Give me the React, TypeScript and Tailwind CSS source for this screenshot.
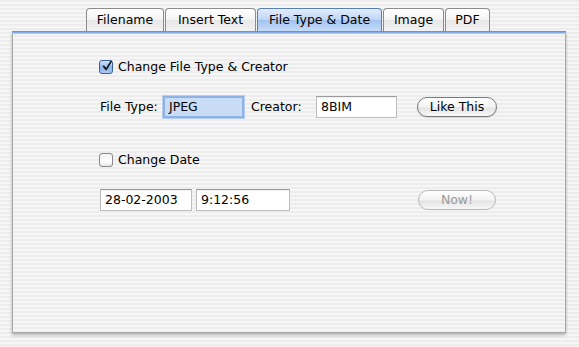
import type { ReactNode } from "react";

const font = "font-['DejaVu_Sans',sans-serif]";

const pinstripe =
  "bg-[repeating-linear-gradient(180deg,#ededed_0px,#ededed_2px,#f6f6f6_2px,#f6f6f6_4px)]";

type TabInfo = { label: string; w: string; active?: boolean };

const tabs: TabInfo[] = [
  { label: "Filename", w: "w-[78px]" },
  { label: "Insert Text", w: "w-[91px]" },
  { label: "File Type & Date", w: "w-[125px]", active: true },
  { label: "Image", w: "w-[61px]" },
  { label: "PDF", w: "w-[45px]" },
];

function Tab({ label, w, active }: TabInfo) {
  return (
    <div
      className={`${w} h-[23px] flex items-center justify-center rounded-t-[4px] border border-b-0 text-[12.5px] text-black ${
        active
          ? "border-[#5a7fb5] bg-[linear-gradient(180deg,#e4eefc_0%,#bcd4f5_50%,#a2c3f0_51%,#c6dcf8_100%)]"
          : "border-[#8c8c8c] bg-[linear-gradient(180deg,#ffffff_0%,#f4f4f4_50%,#e8e8e8_51%,#f2f2f2_100%)]"
      }`}
    >
      {label}
    </div>
  );
}

function Checkbox({ checked }: { checked?: boolean }) {
  return (
    <div
      className={`w-[14px] h-[14px] rounded-[3px] border flex items-center justify-center ${
        checked
          ? "border-[#3c5f94] bg-[linear-gradient(180deg,#cfe0f8_0%,#8fb5eb_55%,#a9c8f2_100%)]"
          : "border-[#8a8a8a] bg-[linear-gradient(180deg,#f0f0f0_0%,#ffffff_60%,#e6e6e6_100%)]"
      }`}
    >
      {checked && (
        <svg width="12" height="12" viewBox="0 0 12 12" className="-mt-[3px] ml-[2px]">
          <path d="M2 6.5 L5 10 L11 0.5" fill="none" stroke="#111" strokeWidth="2" strokeLinecap="round" strokeLinejoin="round" />
        </svg>
      )}
    </div>
  );
}

function Field({ value, w, focused }: { value: string; w: string; focused?: boolean }) {
  return (
    <div
      className={`${w} h-[22px] flex items-center px-[4px] text-[12.5px] text-black ${
        focused
          ? "bg-[#c9dcf6] border-2 border-[#8fb2e4] shadow-[0_0_0_1px_#b7cdee]"
          : "bg-white border border-[#bdbdbd] border-t-[#9a9a9a] shadow-[inset_0_1px_1px_rgba(0,0,0,0.06)]"
      }`}
    >
      {value}
    </div>
  );
}

function PillButton({ children, w, disabled }: { children: ReactNode; w: string; disabled?: boolean }) {
  return (
    <div
      className={`${w} h-[20px] rounded-full border flex items-center justify-center text-[12.5px] bg-[linear-gradient(180deg,#ffffff_0%,#f3f3f3_50%,#e4e4e4_55%,#f8f8f8_100%)] ${
        disabled
          ? "border-[#b8b8b8] text-[#9a9a9a]"
          : "border-[#7a7a7a] text-black shadow-[0_1px_1px_rgba(0,0,0,0.15)]"
      }`}
    >
      {children}
    </div>
  );
}

export default function App() {
  return (
    <div className={`w-[579px] h-[347px] overflow-hidden ${pinstripe} ${font}`}>
      {/* tab strip */}
      <div className="flex items-end gap-[1px] pl-[86px] pt-[8px] relative z-10">
        {tabs.map((t) => (
          <Tab key={t.label} {...t} />
        ))}
      </div>

      {/* panel */}
      <div
        className={`ml-[12px] w-[554px] h-[302px] border border-[#a9a9a9] border-t-0 ${pinstripe} shadow-[0_2px_3px_rgba(0,0,0,0.28)]`}
      >
        <div className="h-[3px] bg-[linear-gradient(180deg,#5b87c8_0%,#8db3ea_60%,#c4d8f4_100%)] -mx-[1px]" />
        <div className="pl-[86px] pt-[24px] flex flex-col text-[12.5px] text-black">
          <div className="h-[18px] flex items-center gap-[5px]">
            <Checkbox checked />
            <span>Change File Type &amp; Creator</span>
          </div>

          <div className="mt-[20px] h-[22px] flex items-center">
            <span className="ml-[1px] w-[63px]">File Type:</span>
            <Field value="JPEG" w="w-[81px]" focused />
            <span className="ml-[7px] w-[65px]">Creator:</span>
            <Field value="8BIM" w="w-[81px]" />
            <div className="ml-[20px]">
              <PillButton w="w-[80px]">Like This</PillButton>
            </div>
          </div>

          <div className="mt-[33px] h-[18px] flex items-center gap-[5px]">
            <Checkbox />
            <span>Change Date</span>
          </div>

          <div className="mt-[20px] h-[22px] flex items-center">
            <div className="ml-[1px]">
              <Field value="28-02-2003" w="w-[92px]" />
            </div>
            <div className="ml-[4px]">
              <Field value="9:12:56" w="w-[94px]" />
            </div>
            <div className="ml-[128px]">
              <PillButton w="w-[78px]" disabled>
                Now!
              </PillButton>
            </div>
          </div>
        </div>
      </div>
    </div>
  );
}
